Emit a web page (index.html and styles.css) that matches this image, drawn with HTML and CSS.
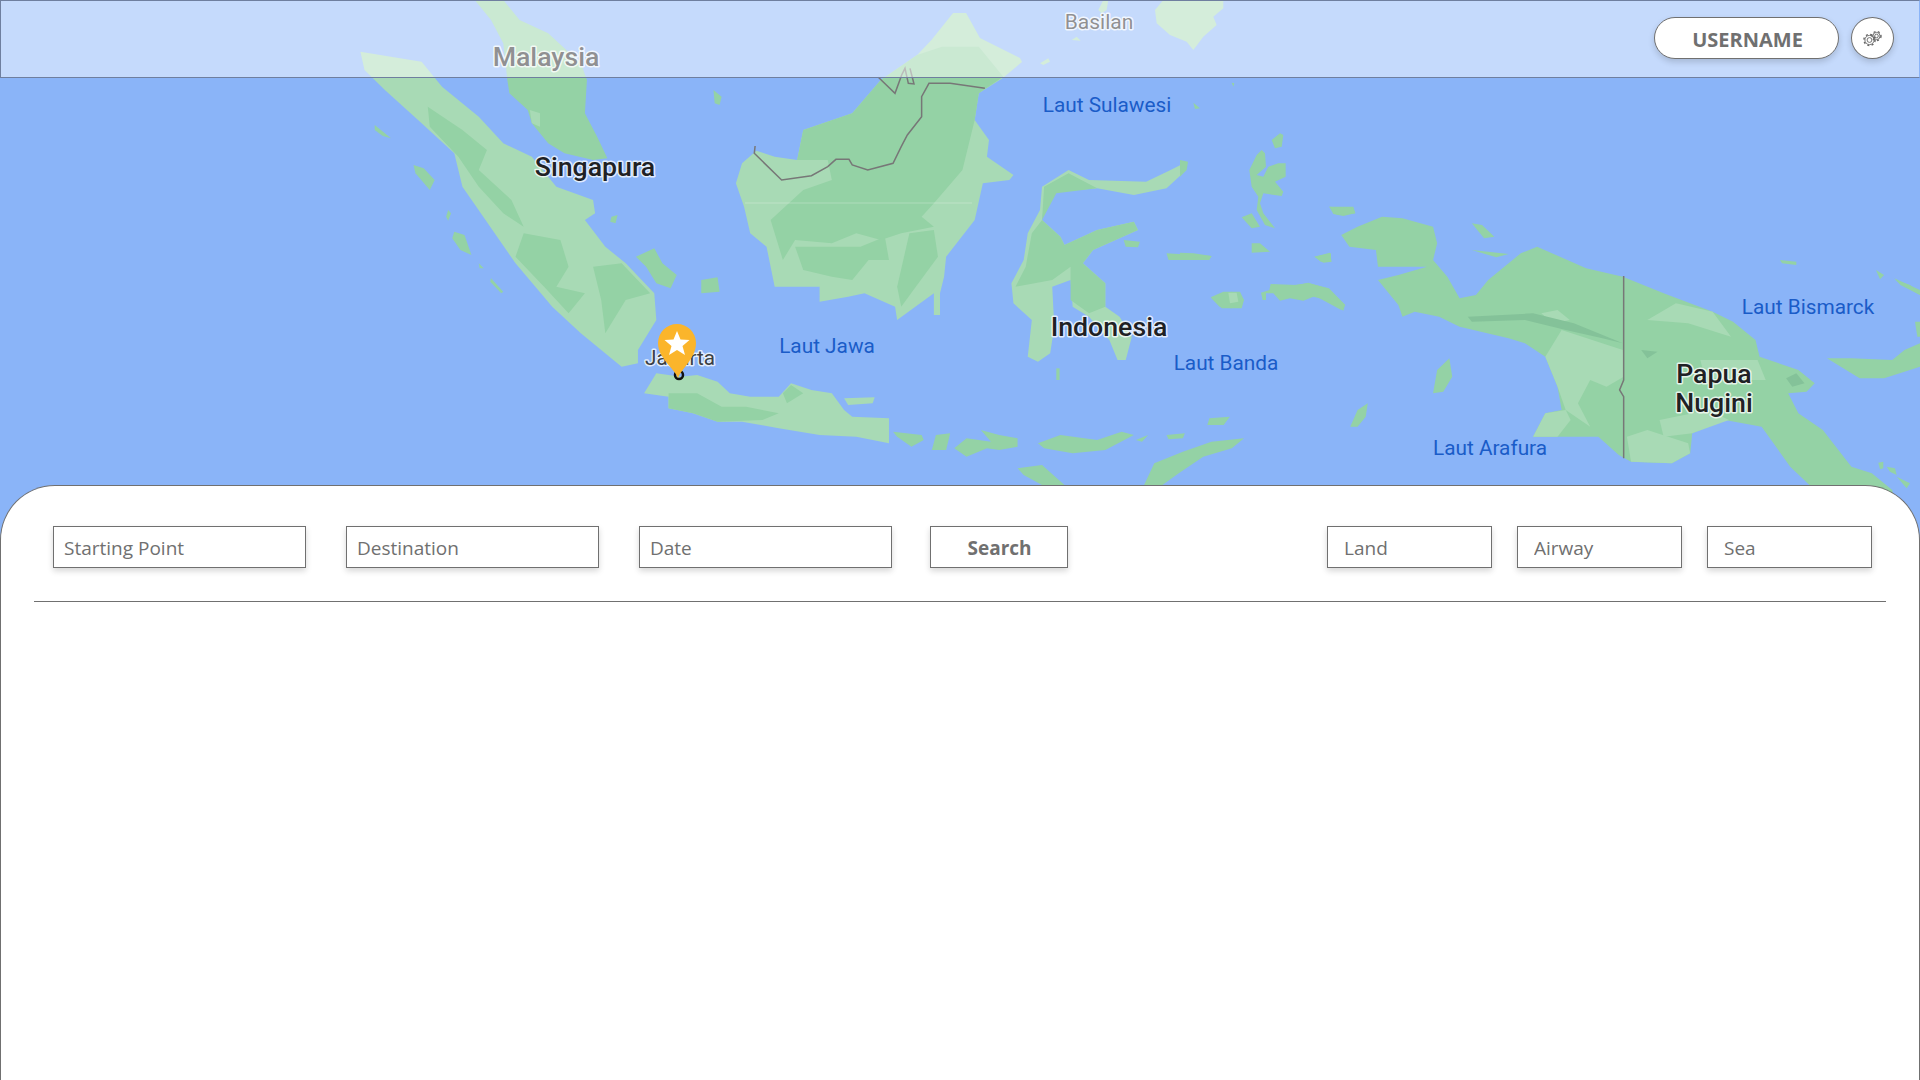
FILE: index.html
```html
<!DOCTYPE html>
<html lang="en">

<head>
    <meta charset="UTF-8">
    <meta name="viewport" content="width=device-width, initial-scale=1.0">
    <title>Route Search</title>
    <link rel="stylesheet" href="styles.css">
</head>
<body>
    <div class="map-area">
        <svg class="map" viewBox="0 0 1920 541" xmlns="http://www.w3.org/2000/svg">
            <!-- sumatra, malay peninsula -->
            <g class="shapes" transform="translate(340 0) scale(.40816 .33333)">
                <polygon class="light" points="50,155 200,185 250,260 340,350 400,430 470,470 530,560 620,600 625,640 600,660 650,740 700,790 770,880 775,960 730,1050 730,1090 690,1100 590,1000 520,920 430,790 300,560 280,460 200,370 110,270 60,210"/>
                <polygon class="land" points="215,320 300,390 360,450 340,510 420,600 450,680 400,640 340,560 290,470 220,380"/>
                <polygon class="land" points="450,700 540,720 560,800 530,860 600,880 560,940 500,860 430,770"/>
                <polygon class="land" points="620,800 690,790 760,880 700,900 650,1000 640,900"/>
                <polygon class="land" points="330,0 400,0 440,60 510,100 590,190 605,240 600,340 630,410 655,475 620,480 550,460 510,430 470,370 460,330 415,280 410,240 400,130 370,60"/>
                <polygon class="light" points="465,330 490,340 490,380 470,370"/>
                <polygon class="land" points="180,495 205,505 232,540 220,570 185,520"/>
                <polygon class="land" points="85,375 125,415 105,408 85,390"/>
                <polygon class="land" points="280,695 305,705 322,765 295,750 275,715"/>
                <polygon class="land" points="265,630 272,640 265,662 260,650"/>
                <polygon class="land" points="915,270 935,290 930,315 918,310"/>
                <polygon class="land" points="725,770 770,745 790,790 825,825 810,865 775,850 750,800"/>
                <polygon class="land" points="885,840 925,832 930,875 885,880"/>
                <polygon class="land" points="370,835 400,875 395,880 368,845"/>
                <polygon class="land" points="665,650 680,645 675,670 662,665"/>
                <polygon class="land" points="340,790 352,805 342,805"/>
            </g>

            <!-- borneo, sulawesi, java and the small islands -->
            <g class="shapes" transform="translate(640 60) scale(.40816 .33333)">
                <polygon class="light" points="590,60 679,-15 714,-60 767,-141 799,-141 833,-66 931,-6 936,6 889,54 830,100 820,180 855,240 850,290 915,345 905,360 840,370 820,480 750,590 745,650 735,700 735,765 720,765 720,700 630,780 625,740 550,700 510,710 440,725 440,680 330,680 310,560 270,520 255,440 235,370 250,310 285,272 330,290 385,300 400,210 520,160"/>
                <polygon class="land" points="590,60 679,-15 740,-40 830,-40 890,50 830,100 820,180 790,330 720,430 690,470 720,500 640,520 590,540 530,520 470,550 380,540 350,600 320,480 400,390 470,360 460,300 385,300 400,210 520,160"/>
                <polygon class="land" points="380,560 470,560 540,560 600,530 610,600 560,600 520,660 470,650 400,630"/>
                <polygon class="land" points="660,520 720,510 730,590 670,690 640,740 630,680"/>
                <polygon class="light" points="1340,305 1330,340 1290,385 1210,405 1120,385 1020,395 990,440 985,480 1030,530 1040,555 1120,510 1210,485 1220,510 1110,570 1085,610 1140,670 1140,740 1175,770 1205,830 1190,900 1170,900 1150,840 1100,770 1060,740 1055,660 1010,680 1015,800 1005,880 975,905 950,890 960,780 915,730 910,670 940,600 950,520 980,450 985,380 1050,330 1100,360 1240,365 1300,330"/>
                <polygon class="land" points="1120,385 1050,340 990,380 985,480 960,520 945,620 920,680 1010,660 1055,620 1055,720 1100,760 1140,740 1140,670 1085,610 1110,570 1220,510 1210,485 1120,510 1040,555 1030,530 985,480 1020,400"/>
                <polygon class="light" points="40,940 100,950 140,945 190,965 220,1000 270,1010 340,1010 370,970 420,990 470,1000 500,1050 520,1070 610,1075 610,1150 530,1130 440,1125 340,1105 250,1085 190,1085 130,1060 70,1045 70,1010 10,1000"/>
                <polygon class="land" points="70,1000 140,1000 200,1040 260,1040 340,1060 300,1080 190,1085 130,1060 70,1045"/>
                <polygon class="land" points="350,1000 370,975 400,1000 360,1030"/>
                <polygon class="light" points="500,1015 575,1012 570,1030 510,1035"/>
                <polygon class="land" points="620,1115 690,1125 695,1140 665,1160 630,1130"/>
                <polygon class="land" points="725,1125 760,1120 750,1170 715,1170"/>
                <polygon class="land" points="770,1165 800,1135 860,1145 835,1110 880,1125 925,1135 925,1160 880,1170 850,1165 800,1190"/>
                <polygon class="land" points="975,1150 1030,1125 1120,1140 1180,1115 1210,1125 1140,1170 1060,1180 990,1165"/>
                <polygon class="land" points="1215,1140 1245,1125 1230,1145"/>
                <polygon class="land" points="1290,1125 1335,1120 1330,1135 1295,1138"/>
                <polygon class="land" points="1235,1275 1260,1210 1330,1175 1400,1145 1480,1135 1450,1165 1380,1190 1320,1240 1280,1275"/>
                <polygon class="land" points="925,1225 985,1215 1040,1275 985,1275 940,1245"/>
                <polygon class="land" points="1395,1075 1445,1070 1430,1095 1390,1095"/>
                <polygon class="land" points="1290,580 1400,588 1395,600 1295,600"/>
                <polygon class="land" points="1400,715 1450,695 1480,720 1450,745 1420,740"/>
                <polygon class="land" points="1185,540 1225,545 1220,562 1190,560"/>
                <polygon class="land" points="1020,925 1028,925 1028,960 1020,960"/>
            </g>

            <!-- mindanao and sulu -->
            <g class="shapes" transform="translate(860 0) scale(.33333)">
                <polygon class="light" points="885,30 910,0 1090,0 1090,25 1060,50 1070,75 1030,110 1000,150 980,125 930,105 890,70"/>
                <polygon class="light" points="715,30 730,0 745,0 740,30 725,40"/>
                <polygon class="light" points="635,120 650,110 662,122"/>
                <polygon class="light" points="540,190 565,175 570,185 550,195"/>
            </g>

            <!-- maluku -->
            <g class="shapes" transform="translate(1180 60) scale(.33333)">
                <polygon class="land" points="155,68 163,70 160,80"/>
                <polygon class="land" points="40,128 60,145 45,147"/>
                <polygon class="land" points="275,240 300,220 310,225 305,260 285,265"/>
                <polygon class="land" points="245,270 255,280 258,320 230,345 250,350 265,320 295,310 317,310 317,350 285,365 310,395 305,408 250,400 240,430 250,460 285,505 255,495 230,450 235,410 215,380 208,330 230,285"/>
                <polygon class="land" points="185,472 215,460 240,500 215,505"/>
                <polygon class="land" points="215,550 240,550 270,575 215,578"/>
                <polygon class="land" points="0,578 40,580 95,588 90,595 0,592"/>
                <polygon class="land" points="403,590 450,578 455,605 430,608"/>
                <polygon class="land" points="448,440 520,440 525,460 490,468 460,462"/>
                <polygon class="land" points="0,300 24,305 20,330 0,350"/>
                <polygon class="land" points="92,712 130,695 180,695 192,720 185,745 125,745"/>
                <polygon class="light" points="145,698 170,698 175,725 150,730"/>
                <polygon class="land" points="243,698 268,690 272,672 350,675 385,668 440,685 495,735 490,752 440,720 400,710 370,722 330,715 300,722 280,700 258,700 258,720 248,720"/>
            </g>

            <!-- new guinea -->
            <g class="shapes" transform="translate(1280 180) scale(.40816 .33333)">
                <polygon class="land" points="150,165 190,140 250,110 300,115 375,140 385,190 375,240 410,290 440,355 480,345 510,300 590,220 630,200 750,265 840,290 940,340 1060,395 1110,425 1165,480 1175,530 1270,570 1310,610 1290,635 1245,640 1270,700 1330,750 1400,860 1450,880 1500,930 1520,1100 1310,1100 1310,930 1250,860 1180,740 1090,720 1010,760 1005,820 960,850 860,845 830,825 780,770 620,770 650,700 690,690 680,620 650,530 600,490 560,475 440,440 390,410 330,395 300,410 290,375 240,300 290,285 360,260 240,260 235,210 170,200"/>
                <polygon class="light" points="690,450 840,510 842,590 800,620 760,600 730,670 760,740 700,690 680,620 650,530"/>
                <polygon class="light" points="650,700 700,690 712,720 680,770 620,770"/>
                <polygon class="light" points="850,770 900,750 1000,790 1005,820 960,850 860,845"/>
                <polygon class="light" points="930,720 1050,690 1100,720 1010,760 940,770"/>
                <polygon class="light" points="970,370 1060,395 1105,470 1000,430 900,420"/>
                <polygon class="light" points="1030,540 1170,540 1190,600 1110,600 1040,590"/>
                <polygon class="light" points="640,400 680,390 710,420 670,430"/>
                <polygon class="dark" points="460,410 620,400 720,430 840,490 790,475 700,450 600,420 470,425"/>
                <polygon class="dark" points="885,510 925,515 900,535"/>
                <polygon class="dark" points="1240,595 1265,580 1285,610 1255,620"/>
                <polygon class="land" points="120,80 180,85 185,100 140,105"/>
                <polygon class="land" points="85,230 125,220 125,245 100,245"/>
                <polygon class="land" points="470,130 495,135 525,170 500,175"/>
                <polygon class="land" points="470,210 560,222 530,232"/>
                <polygon class="land" points="0,320 70,310 120,325 160,375 150,390 90,350 0,350"/>
                <polygon class="land" points="375,640 385,570 415,535 422,590 400,635"/>
                <polygon class="land" points="172,740 190,690 215,670 210,710 190,740"/>
                <polygon class="land" points="1225,240 1265,245 1265,255 1230,250"/>
                <polygon class="land" points="1340,535 1400,535 1500,540 1530,510 1568,490 1568,560 1530,575 1480,595 1420,595"/>
                <polygon class="land" points="1460,270 1480,285 1470,298"/>
                <polygon class="land" points="1505,295 1568,330 1568,345 1520,315"/>
            </g>

            <g class="shapes" transform="translate(1840 280) scale(.33333)">
                <polygon class="land" points="165,0 210,15 240,40 240,45 205,25"/>
                <polygon class="land" points="225,125 240,125 240,170 232,170"/>
                <polygon class="land" points="115,548 130,545 130,565 120,568"/>
                <polygon class="land" points="140,560 165,565 170,585 150,575"/>
                <polygon class="land" points="170,590 210,610 200,625"/>
            </g>

            <!-- borders -->
            <polyline class="line" transform="translate(640 60) scale(.40816 .33333)" points="282,258 280,280 347,360 420,347 460,320 480,298 512,298 520,315 558,330 620,310 640,260 655,225 690,170 690,110 708,70 760,70 845,85"/>
            <polyline class="line" transform="translate(860 0) scale(.33333)" points="55,232 105,280 125,225 135,205 145,250 162,252 150,205"/>
            <polyline class="line" transform="translate(1280 180) scale(.40816 .33333)" points="842,288 842,600 832,630 842,650 842,835"/>
            <line class="seam" x1="745" y1="203" x2="972" y2="203"/>

            <text class="label label-city label-big" x="546" y="66">Malaysia</text>
            <text class="label label-city label-small-gray" x="1099" y="29">Basilan</text>
            <text class="label label-city label-big" x="595" y="176">Singapura</text>
            <text class="label label-city label-big" x="1109" y="336">Indonesia</text>
            <text class="label label-city label-big" x="1714" y="383">Papua</text>
            <text class="label label-city label-big" x="1714" y="412">Nugini</text>
            <text class="label label-sea" x="1107" y="112">Laut Sulawesi</text>
            <text class="label label-sea" x="827" y="353">Laut Jawa</text>
            <text class="label label-sea" x="1226" y="370">Laut Banda</text>
            <text class="label label-sea" x="1808" y="314">Laut Bismarck</text>
            <text class="label label-sea" x="1490" y="455">Laut Arafura</text>
            <text class="label label-city label-jakarta" x="680" y="365">Jakarta</text>

            <circle class="city-dot" cx="679" cy="375" r="4"/>
            <path class="pin" d="M678 378 C674 368 658 358 658 343 A19 19 0 0 1 696 343 C696 358 682 368 678 378 Z"/>
            <polygon class="pin-star" points="677,331 680.5,339.5 689.5,340 682.5,346 685,355 677,350 669,355 671.5,346 664.5,340 673.5,339.5"/>
        </svg>

        <header class="topbar">
            <button class="user-btn">USERNAME</button>
            <button class="gear-btn" aria-label="Settings">
                <svg width="24" height="20" viewBox="0 0 24 20" xmlns="http://www.w3.org/2000/svg">
                    <g class="gear">
                        <circle cx="8.5" cy="12" r="4.6"/>
                        <circle cx="8.5" cy="12" r="2.4"/>
                        <circle class="gear-teeth" cx="8.5" cy="12" r="5.6"/>
                        <circle cx="15.5" cy="8" r="3.6"/>
                        <circle cx="15.5" cy="8" r="1.8"/>
                        <circle class="gear-teeth" cx="15.5" cy="8" r="4.5"/>
                    </g>
                </svg>
            </button>
        </header>
    </div>

    <main class="panel">
        <div class="toolbar">
            <div class="search-group">
                <input class="field" type="text" placeholder="Starting Point">
                <input class="field" type="text" placeholder="Destination">
                <input class="field" type="text" placeholder="Date">
                <button class="search-btn">Search</button>
            </div>
            <div class="mode-group">
                <input class="field mode" type="text" placeholder="Land">
                <input class="field mode" type="text" placeholder="Airway">
                <input class="field mode" type="text" placeholder="Sea">
            </div>
        </div>
        <hr class="divider">
    </main>
</body>

</html>
```

FILE: styles.css
```css
body {
    font-family: "Open Sans", "Noto Sans", sans-serif;
    background-color: #fff;
    color: #707070;
    margin: 0;
    padding: 0;
    height: 1080px;
    overflow: hidden;
}

.map-area {
    position: relative;
    height: 541px;
    background-color: #8ab4f8;
}

.map {
    position: absolute;
    top: 0;
    left: 0;
    width: 1920px;
    height: 541px;
}

.shapes {
    filter: blur(0.6px);
}

.map .land {
    fill: #94d2a5;
}

.map .light {
    fill: #a8dab5;
}

.map .dark {
    fill: #84c299;
}

.map .line {
    fill: none;
    stroke: #777;
    stroke-width: 1.5;
    vector-effect: non-scaling-stroke;
}

.map .seam {
    stroke: rgba(255, 255, 255, 0.25);
    stroke-width: 1;
}

.label {
    font-family: Roboto, sans-serif;
    text-anchor: middle;
    paint-order: stroke;
    stroke-linejoin: round;
}

.label-city {
    fill: #202124;
    stroke: #fff;
    stroke-width: 3px;
    stroke-opacity: .75;
}

.label-big {
    font-size: 26.7px;
    font-weight: 500;
}

.label-small-gray {
    font-size: 21px;
}

.label-jakarta {
    font-size: 20.7px;
    fill: #3c4043;
}

.label-sea {
    font-size: 20.8px;
    fill: #1a5cc8;
}

.city-dot {
    fill: none;
    stroke: #111;
    stroke-width: 2.5;
}

.pin {
    fill: #fbb52b;
}

.pin-star {
    fill: #fff;
}

.topbar {
    position: relative;
    box-sizing: border-box;
    display: flex;
    align-items: center;
    justify-content: flex-end;
    gap: 12px;
    height: 78px;
    padding: 0 25px 2px 0;
    background-color: rgba(255, 255, 255, 0.5);
    border: 1px solid #6f7f9f;
    border-right-color: #8ab4f8;
}

.user-btn {
    width: 185px;
    height: 42px;
    padding: 2px 0 0 2px;
    font-family: inherit;
    font-size: 20px;
    font-weight: 700;
    color: #707070;
    background-color: #fff;
    border: 1px solid #707070;
    border-radius: 21px;
    box-shadow: 0 3px 6px rgba(0, 0, 0, 0.16);
}

.gear-btn {
    display: flex;
    align-items: center;
    justify-content: center;
    width: 43px;
    height: 42px;
    padding: 0;
    background-color: #fff;
    border: 1px solid #707070;
    border-radius: 50%;
    box-shadow: 0 3px 6px rgba(0, 0, 0, 0.16);
}

.gear circle {
    fill: none;
    stroke: #666;
    stroke-width: 0.9;
}

.gear .gear-teeth {
    stroke-width: 1.4;
    stroke-dasharray: 2 2.4;
}

.panel {
    position: relative;
    box-sizing: border-box;
    height: 595px;
    margin-top: -56px;
    padding: 40px 33px 0 33px;
    background-color: #fff;
    border: 1px solid #707070;
    border-bottom: none;
    border-radius: 55px 55px 0 0;
}

.toolbar {
    display: flex;
    justify-content: space-between;
    padding: 0 14px 0 19px;
}

.search-group {
    display: flex;
    gap: 40px;
}

.mode-group {
    display: flex;
    gap: 25px;
}

.field {
    box-sizing: border-box;
    width: 253px;
    height: 42px;
    padding: 1px 10px 0;
    font-family: inherit;
    font-size: 19px;
    color: #707070;
    background-color: #fff;
    border: 1px solid #707070;
    border-radius: 0;
    box-shadow: 0 3px 6px rgba(0, 0, 0, 0.16);
}

.field::placeholder {
    color: #707070;
    opacity: 1;
}

.field.mode {
    width: 165px;
    padding: 2px 15px 0 16px;
}

.search-btn {
    box-sizing: border-box;
    width: 138px;
    height: 42px;
    margin-left: -2px;
    padding: 1px 0 0 1px;
    font-family: inherit;
    font-size: 19px;
    font-weight: 700;
    color: #707070;
    background-color: #fff;
    border: 1px solid #707070;
    box-shadow: 0 3px 6px rgba(0, 0, 0, 0.16);
}

.divider {
    height: 1px;
    margin: 33px 0 0 0;
    background-color: #707070;
    border: none;
}
```
